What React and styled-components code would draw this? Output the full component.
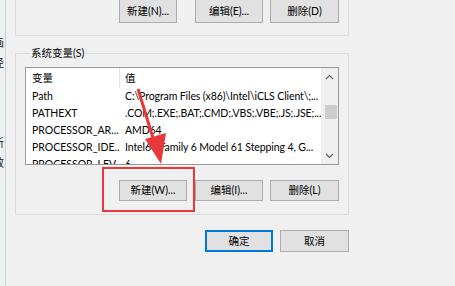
import styled, { createGlobalStyle } from "styled-components";

const GlobalStyle = createGlobalStyle`
  html, body {
    margin: 0;
    padding: 0;
    background: #f0f0f0;
  }
  body {
    font-family: Lato, "Noto Sans CJK SC", sans-serif;
    font-size: 10.5px;
    color: #000;
  }
`;

const Screen = styled.div`
  position: relative;
  width: 455px;
  height: 286px;
  overflow: hidden;
  background: #f0f0f0;
  display: flex;
`;

const LeftEdge = styled.div`
  width: 15px;
  flex: none;
  display: flex;
`;

const Fragments = styled.div`
  width: 5px;
  overflow: hidden;
  display: flex;
  flex-direction: column;
  padding-top: 32px;
  & span {
    display: block;
    margin-left: -7px;
    height: 20px;
    line-height: 20px;
    font-size: 11px;
    font-family: "Noto Sans CJK SC", sans-serif;
    color: #222;
  }
  & span.gap {
    margin-top: 60px;
  }
`;

const EdgeLine = styled.div`
  width: 1px;
  background: #b9d8dc;
`;

const Main = styled.div`
  width: 334px;
  flex: none;
  display: flex;
  flex-direction: column;
`;

const TopGroup = styled.div`
  box-sizing: content-box;
  width: 323px;
  height: 35px;
  padding-right: 9px;
  border: 1px solid #dcdcdc;
  border-top: none;
  display: flex;
  justify-content: flex-end;
  align-items: flex-start;
`;

const Button = styled.button`
  box-sizing: border-box;
  width: ${(p) => p.$w || 68}px;
  height: ${(p) => p.$h || 21}px;
  margin-left: ${(p) => p.$gap || 0}px;
  margin-top: ${(p) => p.$mt || 0}px;
  padding: 0;
  background: #e1e1e1;
  border: ${(p) => (p.$primary ? "2px solid #0078d7" : "1px solid #adadad")};
  font-family: Lato, "Noto Sans CJK SC", sans-serif;
  font-size: 10.5px;
  color: #000;
  line-height: 1;
`;

const GroupBox = styled.fieldset`
  margin: 10px 0 0 0;
  min-width: 0;
  padding: 7px 9px 13px 9px;
  border: 1px solid #dcdcdc;
  display: flex;
  flex-direction: column;
`;

const Legend = styled.legend`
  margin-left: 5px;
  padding: 0 1px;
  height: 14px;
  line-height: 14px;
`;

const ListBox = styled.div`
  width: 314px;
  height: 98px;
  box-sizing: border-box;
  border: 1px solid #9a9a9a;
  background: #fff;
  display: flex;
  overflow: hidden;
`;

const Table = styled.div`
  flex: 1;
  display: flex;
  flex-direction: column;
`;

const Row = styled.div`
  display: grid;
  grid-template-columns: 94px 1fr;
  height: ${(p) => (p.$head ? 20 : 17)}px;
  line-height: ${(p) => (p.$head ? 20 : 17)}px;
  flex: none;
  white-space: nowrap;
`;

const Cell = styled.div`
  padding-left: ${(p) => (p.$first ? 6 : 5)}px;
  overflow: hidden;
  letter-spacing: ${(p) => (p.$first ? 0 : -0.1)}px;
  border-right: ${(p) => (p.$divider ? "1px solid #e5e5e5" : "none")};
`;

const ScrollBar = styled.div`
  width: 17px;
  flex: none;
  background: #f0f0f0;
  display: flex;
  flex-direction: column;
`;

const ScrollArrow = styled.div`
  height: 17px;
  display: flex;
  align-items: center;
  justify-content: center;
`;

const Track = styled.div`
  flex: 1;
  display: flex;
  flex-direction: column;
  align-items: flex-end;
  padding-right: 1px;
`;

const Thumb = styled.div`
  margin-top: 20px;
  width: 12px;
  height: 14px;
  background: #cdcdcd;
`;

const ButtonRow = styled.div`
  display: flex;
  justify-content: flex-end;
  margin-top: ${(p) => p.$mt || 0}px;
`;

const RedFrame = styled.div`
  position: absolute;
  left: 102px;
  top: 167px;
  width: 93px;
  height: 45px;
  box-sizing: border-box;
  border: 2px solid #e8383b;
`;

const ArrowLayer = styled.svg`
  position: absolute;
  left: 0;
  top: 0;
  pointer-events: none;
`;

const Chevron = ({ down }) => (
  <svg width="9" height="6" viewBox="0 0 9 6">
    <path
      d={down ? "M1 1 L4.5 4.5 L8 1" : "M1 5 L4.5 1.5 L8 5"}
      fill="none"
      stroke="#606060"
      strokeWidth="1.1"
    />
  </svg>
);

const rows = [
  ["Path", "C:\\Program Files (x86)\\Intel\\iCLS Client\\;..."],
  ["PATHEXT", ".COM;.EXE;.BAT;.CMD;.VBS;.VBE;.JS;.JSE;..."],
  ["PROCESSOR_AR...", "AMD64"],
  ["PROCESSOR_IDE...", "Intel64 Family 6 Model 61 Stepping 4, G..."],
  ["PROCESSOR_LEV...", "6"],
];

export default function App() {
  return (
    <>
      <GlobalStyle />
      <Screen>
        <LeftEdge>
          <Fragments>
            <span>画</span>
            <span>径</span>
            <span className="gap">新</span>
            <span>效</span>
          </Fragments>
          <EdgeLine />
        </LeftEdge>
        <Main>
          <TopGroup>
            <Button $w={58} $h={24} $mt={-1}>新建(N)...</Button>
            <Button $w={68} $h={24} $mt={-1} $gap={18}>编辑(E)...</Button>
            <Button $w={69} $h={24} $mt={-1} $gap={7}>删除(D)</Button>
          </TopGroup>
          <GroupBox>
            <Legend>系统变量(S)</Legend>
            <ListBox>
              <Table>
                <Row $head>
                  <Cell $first $divider>变量</Cell>
                  <Cell>值</Cell>
                </Row>
                {rows.map(([name, value]) => (
                  <Row key={name}>
                    <Cell $first>{name}</Cell>
                    <Cell>{value}</Cell>
                  </Row>
                ))}
              </Table>
              <ScrollBar>
                <ScrollArrow>
                  <Chevron />
                </ScrollArrow>
                <Track>
                  <Thumb />
                </Track>
                <ScrollArrow>
                  <Chevron down />
                </ScrollArrow>
              </ScrollBar>
            </ListBox>
            <ButtonRow $mt={15}>
              <Button $w={68}>新建(W)...</Button>
              <Button $w={68} $gap={8}>编辑(I)...</Button>
              <Button $w={69} $gap={7}>删除(L)</Button>
            </ButtonRow>
          </GroupBox>
          <ButtonRow $mt={15}>
            <Button $w={68} $h={22} $primary>确定</Button>
            <Button $w={69} $h={22} $gap={7}>取消</Button>
          </ButtonRow>
        </Main>
        <RedFrame />
        <ArrowLayer width="455" height="286" viewBox="0 0 455 286">
          <line x1="138" y1="89" x2="153" y2="138" stroke="#e8383b" strokeWidth="3" />
          <polygon points="145,139 166,133 161,164" fill="#e8383b" />
        </ArrowLayer>
      </Screen>
    </>
  );
}
